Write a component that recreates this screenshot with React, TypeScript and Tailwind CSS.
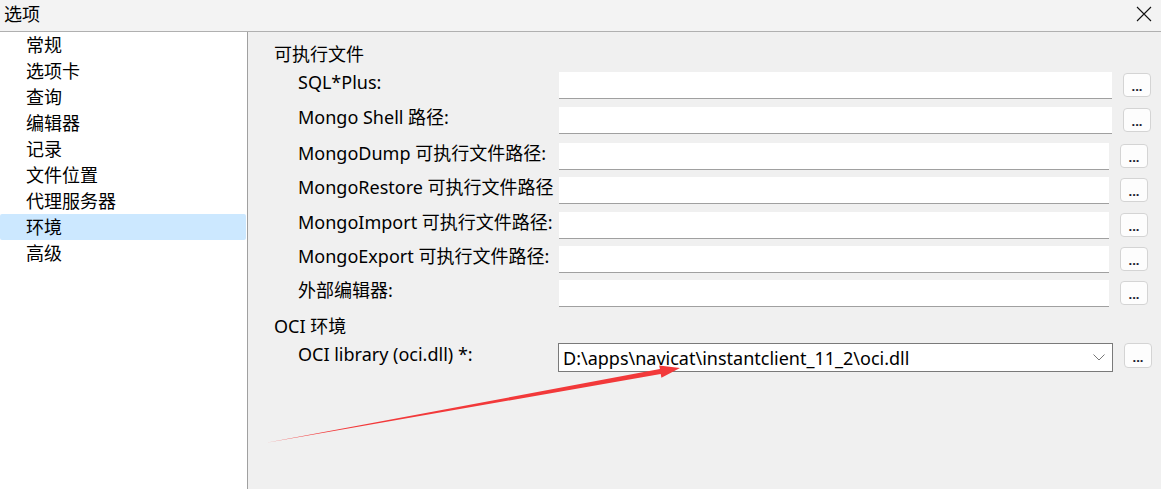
import React from "react";

const FONT = {
  fontFamily:
    '"Noto Sans", "Noto Sans CJK SC", sans-serif',
};

const navItems = ["常规", "选项卡", "查询", "编辑器", "记录", "文件位置", "代理服务器", "环境", "高级"];

type Row = { label: string; mt: string; w: string };

const rows: Row[] = [
  { label: "SQL*Plus:", mt: "mt-[6px]", w: "w-[553px]" },
  { label: "Mongo Shell 路径:", mt: "mt-[8px]", w: "w-[553px]" },
  { label: "MongoDump 可执行文件路径:", mt: "mt-[9px]", w: "w-[550px]" },
  { label: "MongoRestore 可执行文件路径", mt: "mt-[7px]", w: "w-[550px]" },
  { label: "MongoImport 可执行文件路径:", mt: "mt-[8px]", w: "w-[550px]" },
  { label: "MongoExport 可执行文件路径:", mt: "mt-[7px]", w: "w-[550px]" },
  { label: "外部编辑器:", mt: "mt-[7px]", w: "w-[550px]" },
];

function DotsButton() {
  return (
    <button className="ml-[11px] mt-[1px] w-[28px] h-[24px] rounded-[4px] border border-[#d4d4d4] bg-[#fdfdfd] flex items-end justify-center pb-[5px] text-[13px] leading-[10px] text-[#1a1a2e] font-bold tracking-[0px]">
      ...
    </button>
  );
}

export default function App() {
  return (
    <div
      className="relative w-[1161px] h-[489px] flex flex-col bg-[#f0f0f0] text-black overflow-hidden"
      style={FONT}
    >
      {/* Title bar */}
      <div className="h-[32px] shrink-0 flex items-center justify-between border-b border-[#b0b0b0] bg-[#f3f3f3]">
        <span className="pl-[4px] text-[18px] leading-[24px] -mt-[3px]">选项</span>
        <svg width="16" height="16" viewBox="0 0 16 16" className="mr-[9px] -mt-[3px]">
          <path d="M1 1 L15 15 M15 1 L1 15" stroke="#111" strokeWidth="1.1" fill="none" />
        </svg>
      </div>

      <div className="flex flex-1">
        {/* Left nav */}
        <div className="w-[248px] shrink-0 bg-white border-r border-[#a0a0a0] flex flex-col">
          {navItems.map((n) => (
            <div
              key={n}
              className={
                "h-[26px] w-[246px] flex items-center pl-[26px] text-[18px] leading-[26px] " +
                (n === "环境" ? "bg-[#cce8ff] rounded-[2px]" : "")
              }
            >
              {n}
            </div>
          ))}
        </div>

        {/* Right panel */}
        <div className="flex-1 flex flex-col pt-[10px] pl-[26px]">
          <div className="h-[24px] leading-[24px] text-[18px]">可执行文件</div>
          {rows.map((r) => (
            <div key={r.label} className={"flex items-start h-[27px] " + r.mt}>
              <div className="w-[285px] shrink-0 pl-[24px] h-[20px] leading-[20px] text-[18px] whitespace-nowrap">
                {r.label}
              </div>
              <div className={"h-[27px] shrink-0 bg-white border-b border-[#a0a0a0] " + r.w}></div>
              <DotsButton />
            </div>
          ))}
          <div className="mt-[7px] h-[24px] leading-[24px] text-[18px]">OCI 环境</div>
          <div className="mt-[5px] flex items-start h-[29px]">
            <div className="w-[284px] shrink-0 pl-[24px] h-[20px] mt-[1px] leading-[20px] text-[18px] whitespace-nowrap">
              OCI library (oci.dll) *:
            </div>
            <div className="w-[555px] shrink-0 h-[29px] bg-white border border-[#7a7a7a] flex items-center justify-between pl-[4px] pr-[7px]">
              <span className="text-[18px] leading-[22px]">D:\apps\navicat\instantclient_11_2\oci.dll</span>
              <svg width="12" height="7" viewBox="0 0 12 7">
                <path d="M0.5 0.5 L6 6 L11.5 0.5" stroke="#777" strokeWidth="1" fill="none" />
              </svg>
            </div>
            <div className="ml-[11px]">
              <button className="w-[28px] h-[25px] rounded-[4px] border border-[#d4d4d4] bg-[#fdfdfd] flex items-end justify-center pb-[5px] text-[13px] leading-[10px] text-[#1a1a2e] font-bold">
                ...
              </button>
            </div>
          </div>
        </div>
      </div>

      {/* Red annotation arrow */}
      <svg className="absolute inset-0 pointer-events-none" width="1161" height="489" viewBox="0 0 1161 489">
        <polygon
          points="265,443 660.7,374.1 661.4,377.8 680,368 659.2,365.4 659.9,369.1"
          fill="#f2393a"
        />
      </svg>
    </div>
  );
}
